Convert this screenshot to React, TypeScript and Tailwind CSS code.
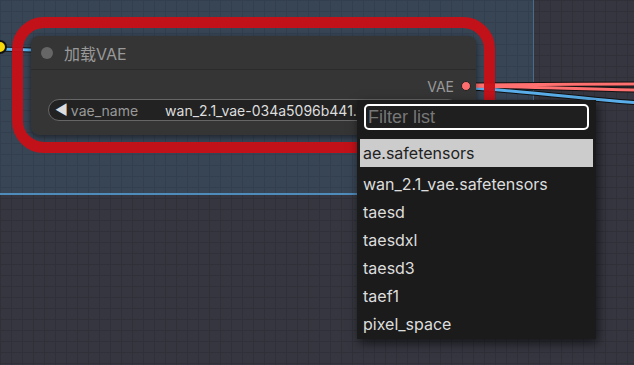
import React from "react";

/* ================= DATA ================= */
const options: string[] = [
  "ae.safetensors",
  "wan_2.1_vae.safetensors",
  "taesd",
  "taesdxl",
  "taesd3",
  "taef1",
  "pixel_space",
];

const font = { fontFamily: "Inter, 'Noto Sans CJK SC', sans-serif" };

/* ================= LINKS ================= */
function Links() {
  return (
    <svg className="absolute inset-0" width={634} height={365}>
      {/* left input link */}
      <path d="M0 49 L31 50" stroke="#111" strokeWidth={5} fill="none" />
      <path d="M0 49 L31 50" stroke="#5ab4ef" strokeWidth={3} fill="none" />
      {/* outgoing links */}
      <path d="M470 85 C 540 85, 580 84, 640 84" stroke="#111" strokeWidth={5} fill="none" />
      <path d="M470 86 C 540 87, 580 89, 640 90" stroke="#111" strokeWidth={5} fill="none" />
      <path d="M470 88 C 540 92, 580 99, 640 103" stroke="#111" strokeWidth={5} fill="none" />
      <path d="M470 88 C 540 92, 580 99, 640 103" stroke="#5aaeea" strokeWidth={3} fill="none" />
      <path d="M470 86 C 540 87, 580 89, 640 90" stroke="#ff7070" strokeWidth={3} fill="none" />
      <path d="M470 85 C 540 85, 580 84, 640 84" stroke="#ff7070" strokeWidth={3} fill="none" />
      {/* yellow slot at left */}
      <circle cx={0} cy={47} r={6} fill="#f5d90a" stroke="#111" strokeWidth={2} />
    </svg>
  );
}

/* ================= COMPONENT ================= */
export default function App() {
  return (
    <div
      className="relative w-[634px] h-[365px] overflow-hidden bg-[#35363f] bg-[linear-gradient(to_right,#2f3038_1px,transparent_1px),linear-gradient(to_bottom,#2f3038_1px,transparent_1px)] bg-[size:11px_11px]"
      style={font}
    >
      {/* GROUP */}
      <div className="absolute left-0 top-0 w-[534px] h-[195px] bg-[#384555] bg-[linear-gradient(to_right,#333f4e_1px,transparent_1px),linear-gradient(to_bottom,#333f4e_1px,transparent_1px)] bg-[size:11px_11px] border-r border-b-2 border-r-[#4a6b8a] border-b-[#4f8bbb]" />

      <Links />

      {/* NODE */}
      <div className="absolute left-[31px] top-[36px] w-[445px] h-[99px] rounded-lg bg-[#353535] shadow-[0_2px_6px_rgba(0,0,0,0.5)] flex flex-col">
        <div className="h-[34px] flex items-center gap-[11px] pl-[10px] border-b border-[#2b2b2b]">
          <span className="w-[12px] h-[12px] rounded-full bg-[#666]" />
          <span className="text-[16px] text-[#999] mt-[2px]">加载VAE</span>
        </div>
        <div className="flex justify-end items-center gap-[7px] pr-[5px] mt-[8px] h-[16px]">
          <span className="text-[14px] text-[#999]">VAE</span>
          <span className="w-[10px] h-[10px] rounded-full bg-[#ff6e6e] border border-[#222]" />
        </div>
        <div className="mx-[17px] mt-[5px] h-[22px] rounded-full border border-[#666] bg-[#222] flex items-center pl-[6px] overflow-hidden whitespace-nowrap">
          <span className="text-[14px] text-[#ddd] leading-none">◀</span>
          <span className="ml-[3px] text-[14px] text-[#999]">vae_name</span>
          <span className="ml-[27px] text-[14px] text-[#ddd]">wan_2.1_vae-034a5096b441.safetensors</span>
        </div>
      </div>

      {/* RED HIGHLIGHT */}
      <div className="absolute left-[12px] top-[17px] w-[483px] h-[136px] rounded-[32px] border-[11px] border-[#c90f16]/95" />

      {/* CONTEXT MENU */}
      <div className="absolute left-[357px] top-[100px] w-[239px] h-[239px] bg-[#1b1b1b] shadow-[2px_4px_10px_rgba(0,0,0,0.6)] flex flex-col pt-[4px] px-[3px]">
        <div className="mx-[4px] h-[26px] rounded-[5px] border-2 border-white bg-[#1f1f1f] flex items-center px-[2px]">
          <span className="text-[18px] text-[#777]" style={{ fontFamily: "'Liberation Sans', sans-serif" }}>
            Filter list
          </span>
        </div>
        <div className="mt-[9px] flex flex-col">
          {options.map((opt, i) => (
            <div
              key={opt}
              className={`h-[28px] flex items-center px-[3px] text-[16px] ${
                i === 0 ? "bg-[#cccccc] text-[#222] h-[25px] mb-[3px]" : "text-[#ddd]"
              }`}
            >
              {opt}
            </div>
          ))}
        </div>
      </div>
    </div>
  );
}
